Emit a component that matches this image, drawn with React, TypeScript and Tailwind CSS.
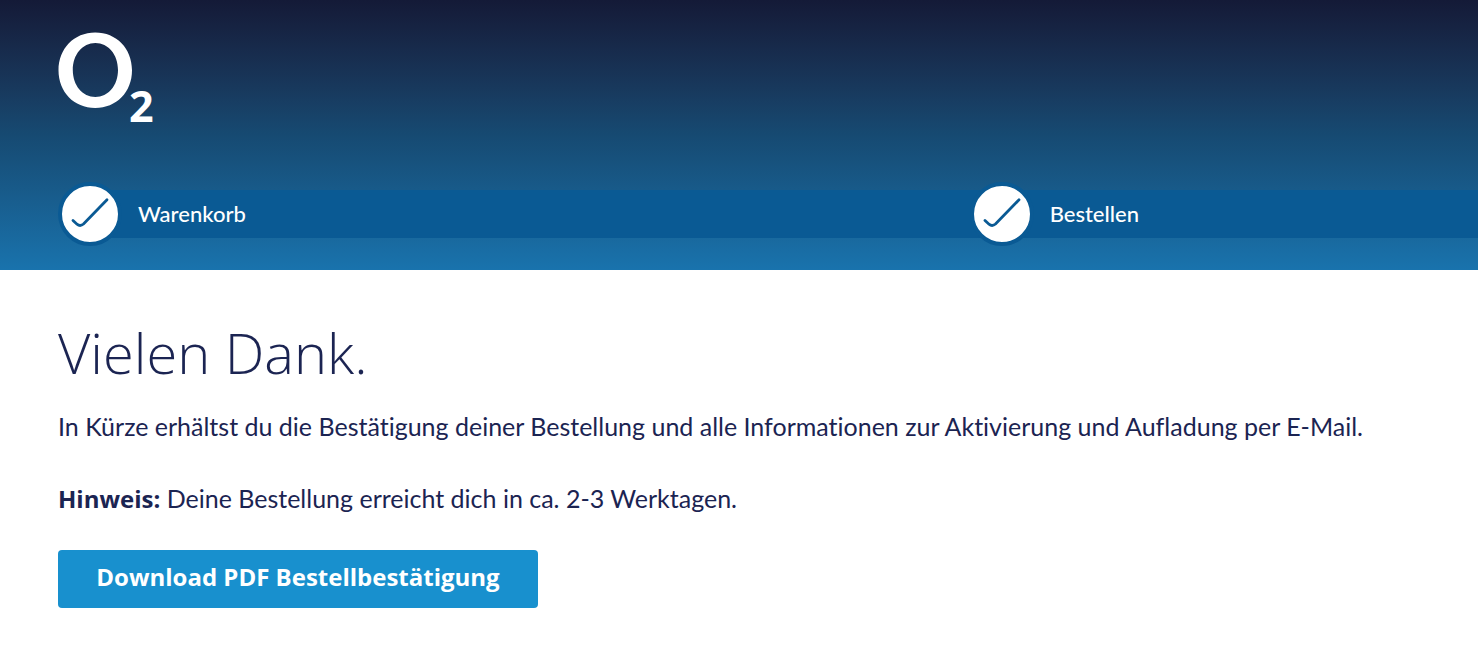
const steps = ["Warenkorb", "Bestellen"];

const Logo = () => (
  <svg className="block h-28 w-28" viewBox="0 0 112 112" fill="#fff" role="img" aria-label="O2">
    <path
      fillRule="evenodd"
      d="M37.2 .5C58.500 .5 74 16.500 74 38.300S58.500 76 37.200 76 .5 60 .5 38.300 16 .5 37.200 .5ZM37.400 11C24.500 11 14.800 22.500 14.800 38S24.500 65 37.400 65 60 53.500 60 38 50.300 11 37.400 11Z"
    />
    <text x="71" y="90" fontSize="43" fontWeight="700" fontFamily="'Open Sans', sans-serif">
      2
    </text>
  </svg>
);

const StepIcon = () => (
  <span className="relative flex size-16 shrink-0 rounded-full border-4 border-[#0a5a94] bg-white">
    <svg
      className="size-14"
      viewBox="0 0 56 56"
      fill="none"
      stroke="#0a5a94"
      strokeWidth="2.8"
      strokeLinecap="round"
      aria-hidden="true"
    >
      <path d="M11 34.500L15 38.200Q18.200 40.800 21.500 38L45 13.800" />
    </svg>
  </span>
);

const Header = () => (
  <header className="overflow-hidden bg-linear-to-b from-[#141a37] from-0% via-[#164a72] via-50% to-[#1973ad] pt-8 pb-6 pl-[58px]">
    <Logo />
    <ol className="mt-[38px] grid grid-cols-[64.2%_1fr]">
      {steps.map((step) => (
        <li key={step} className="flex items-center">
          <StepIcon />
          <span className="-mr-8 -ml-8 flex h-12 flex-1 items-center bg-[#0a5a94] pl-12 text-[22px] leading-7 font-medium text-white">
            {step}
          </span>
        </li>
      ))}
    </ol>
  </header>
);

const App = () => {
  return (
    <div className="min-h-screen bg-white font-['Lato','Open_Sans',sans-serif] text-[#1b2452] [font-variant-ligatures:none]">
      <Header />
      <main className="px-[58px] pt-[46px] pb-12">
        <h1 className="font-['Open_Sans',sans-serif] text-[56px] leading-[72px] font-light">Vielen Dank.</h1>
        <p className="mt-5 text-[25px] leading-9">
          In Kürze erhältst du die Bestätigung deiner Bestellung und alle Informationen zur Aktivierung und Aufladung per E-Mail.
        </p>
        <p className="mt-9 text-[25px] leading-9">
          <strong className="font-['Open_Sans',sans-serif] text-[24px] font-bold">Hinweis:</strong> Deine Bestellung erreicht dich in ca. 2-3 Werktagen.
        </p>
        <button
          type="button"
          className="mt-[33px] h-[58px] w-[480px] max-w-full rounded bg-[#1890ce] pb-1 font-['Open_Sans',sans-serif] text-[24px] leading-9 font-bold text-white"
        >
          Download PDF Bestellbestätigung
        </button>
      </main>
    </div>
  );
};

export default App;
